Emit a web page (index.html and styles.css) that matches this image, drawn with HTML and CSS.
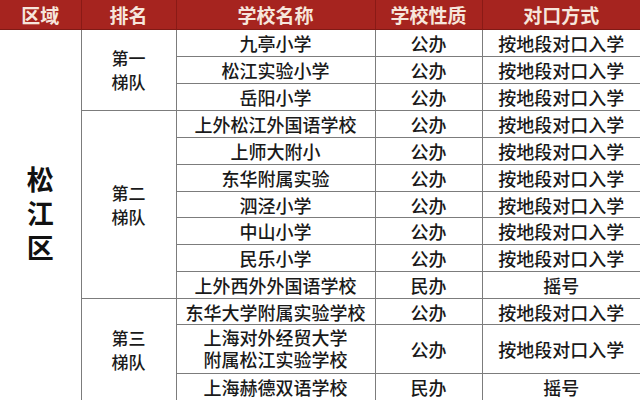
FILE: index.html
```html
<!DOCTYPE html>
<html lang="zh-CN">
<head>
<meta charset="utf-8">
<title>松江区</title>
<link rel="stylesheet" href="styles.css">
</head>
<body>
<table class="tbl">
  <colgroup>
    <col class="c1"><col class="c2"><col class="c3"><col class="c4"><col class="c5">
  </colgroup>
  <thead>
    <tr class="head">
      <th>区域</th><th>排名</th><th>学校名称</th><th>学校性质</th><th>对口方式</th>
    </tr>
  </thead>
  <tbody>
    <tr class="r27">
      <td rowspan="13" class="area"><span>松</span><span>江</span><span>区</span></td>
      <td rowspan="3" class="rank">第一<br>梯队</td>
      <td>九亭小学</td><td>公办</td><td>按地段对口入学</td>
    </tr>
    <tr class="r27"><td>松江实验小学</td><td>公办</td><td>按地段对口入学</td></tr>
    <tr class="r27"><td>岳阳小学</td><td>公办</td><td>按地段对口入学</td></tr>
    <tr class="r27">
      <td rowspan="7" class="rank">第二<br>梯队</td>
      <td>上外松江外国语学校</td><td>公办</td><td>按地段对口入学</td>
    </tr>
    <tr class="r27"><td>上师大附小</td><td>公办</td><td>按地段对口入学</td></tr>
    <tr class="r27"><td>东华附属实验</td><td>公办</td><td>按地段对口入学</td></tr>
    <tr class="r26"><td>泗泾小学</td><td>公办</td><td>按地段对口入学</td></tr>
    <tr class="r27"><td>中山小学</td><td>公办</td><td>按地段对口入学</td></tr>
    <tr class="r27"><td>民乐小学</td><td>公办</td><td>按地段对口入学</td></tr>
    <tr class="r27"><td>上外西外外国语学校</td><td>民办</td><td>摇号</td></tr>
    <tr class="r26">
      <td rowspan="3" class="rank">第三<br>梯队</td>
      <td>东华大学附属实验学校</td><td>公办</td><td>按地段对口入学</td>
    </tr>
    <tr class="r49"><td class="two"><span>上海对外经贸大学</span><span>附属松江实验学校</span></td><td>公办</td><td>按地段对口入学</td></tr>
    <tr class="r27 last"><td>上海赫德双语学校</td><td>民办</td><td>摇号</td></tr>
  </tbody>
</table>
</body>
</html>
```
FILE: styles.css
```css
html, body {
  margin: 0;
  padding: 0;
  background: #ffffff;
}
body {
  width: 640px;
  height: 400px;
  overflow: hidden;
  font-family: "Noto Sans CJK SC", "Noto Sans", sans-serif;
  color: #1a1a1a;
}
.tbl {
  border-collapse: collapse;
  table-layout: fixed;
  width: 640px;
}
.c1 { width: 81px; }
.c2 { width: 95px; }
.c3 { width: 199px; }
.c4 { width: 107px; }
.c5 { width: 158px; }

.head th {
  height: 29px;
  padding: 0;
  background: #a6241f;
  color: #f6e6dc;
  font-size: 19px;
  font-weight: 700;
  line-height: 29px;
  text-align: center;
  border-left: 1px solid #8a1a16;
  border-bottom: 1px solid #7f1a16;
}
.head th:first-child { border-left: none; }

td {
  padding: 0;
  text-align: center;
  vertical-align: middle;
  font-size: 18px;
  font-weight: 500;
  line-height: 22px;
  border: 1px solid #7c7c7c;
  white-space: nowrap;
}
td:last-child { border-right: none; }
.r27 td { height: 26px; }
.r26 td { height: 25px; }
.r49 td { height: 48px; }
.last td { border-bottom: 1px solid #d8d8d8; }

.area {
  border-left: none;
  border-bottom: 1px solid #d8d8d8;
  font-family: "Liberation Sans", "Noto Sans CJK SC", sans-serif;
  font-size: 27px;
  font-weight: 700;
  color: #111;
}
.area span {
  display: block;
  line-height: 34px;
}
.rank {
  font-size: 17px;
  line-height: 24px;
}
.two span {
  display: block;
  font-family: "Liberation Sans", "Noto Sans CJK SC", sans-serif;
  line-height: 22px;
  position: relative;
  top: 1px;
}
```
